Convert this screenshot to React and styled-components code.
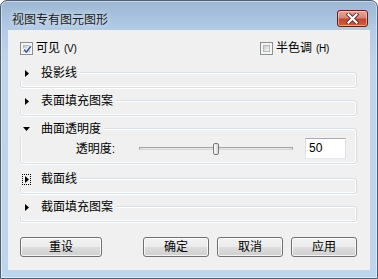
import React from "react";
import styled, { createGlobalStyle } from "styled-components";

const Global = createGlobalStyle`
  html, body { margin: 0; padding: 0; background: #ffffff; }
  body { font-family: "Liberation Sans", "Noto Sans CJK SC", sans-serif; }
  * { box-sizing: border-box; }
`;

const FONT = `"Liberation Sans", "Noto Sans CJK SC", sans-serif`;

const Window = styled.div`
  width: 378px;
  height: 279px;
  border: 1px solid #4e5f72;
  border-radius: 7px 7px 0 0;
  background: linear-gradient(to bottom, #9bb6d4 0px, #b3cbe5 28px, #bcd4ec 60px, #bdd5ed 100%);
  box-shadow: inset 0 0 0 1px rgba(255, 255, 255, 0.45);
  display: flex;
  flex-direction: column;
  padding: 0 7px 8px 7px;
  font-family: ${FONT};
`;

const TitleBar = styled.div`
  height: 29px;
  display: flex;
  align-items: flex-start;
  justify-content: space-between;
  padding: 0 2px 0 4px;
`;

const Title = styled.div`
  margin-top: 11px;
  font-size: 12px;
  line-height: 16px;
  color: #1b1b1b;
  text-shadow: 0 0 6px rgba(255, 255, 255, 0.9);
`;

const CloseButton = styled.div`
  margin-top: 9px;
  width: 31px;
  height: 17px;
  border: 1px solid #5e2118;
  border-radius: 3px;
  background: linear-gradient(to bottom, #e7a597 0%, #d98575 45%, #c2432f 55%, #d0603f 100%);
  box-shadow: inset 0 0 0 1px rgba(255, 220, 210, 0.55);
  display: flex;
  align-items: center;
  justify-content: center;
`;

const Client = styled.div`
  flex: 1;
  background: #f0f0f0;
  display: flex;
  flex-direction: column;
  font-size: 12px;
  color: #000;
`;

const CheckRow = styled.div`
  display: grid;
  grid-template-columns: 240px auto;
  padding: 12px 0 0 12px;
  height: 25px;
`;

const CheckItem = styled.div`
  display: flex;
  align-items: center;
  height: 13px;
  gap: 3px;
  line-height: 13px;
`;

const Box = styled.span`
  width: 13px;
  height: 13px;
  border: 1px solid #8e8f8f;
  background: #f4f4f4;
  padding: 2px;
  display: inline-flex;
  position: relative;
`;

const BoxInner = styled.span`
  flex: 1;
  background: linear-gradient(135deg, #c5c9ce 0%, #e4e6e8 60%, #f6f6f6 100%);
  border: 1px solid #b4b8bd;
`;

const CheckSvg = styled.svg`
  position: absolute;
  left: 1px;
  top: 1px;
`;

const Accel = styled.span`
  font-size: 10px;
  margin-left: 4px;
  letter-spacing: -0.3px;
`;

const Sections = styled.div`
  margin-top: 17px;
  padding: 0 13px 0 12px;
  display: flex;
  flex-direction: column;
`;

const Section = styled.div`
  height: ${(p) => (p.$open ? 50 : 28)}px;
`;

const Frame = styled.div`
  position: relative;
  height: ${(p) => (p.$open ? 36 : 16)}px;
  border: 1px solid #d5dfe5;
  border-radius: 3px;
  box-shadow: inset 0 0 0 1px #ffffff, 0 1px 0 #ffffff;
`;

const Header = styled.div`
  position: absolute;
  top: -8px;
  left: -4px;
  height: 16px;
  display: flex;
  align-items: center;
  padding: 0 3px 0 5px;
  background: #f0f0f0;
`;

const ArrowBox = styled.span`
  width: 9px;
  height: 11px;
  display: flex;
  align-items: center;
  justify-content: center;
  outline: ${(p) => (p.$focus ? "1px dotted #000" : "none")};
  outline-offset: -1px;
  margin-right: 10px;
`;

const HeaderText = styled.span`
  font-size: 12px;
  line-height: 16px;
`;

const Content = styled.div`
  display: flex;
  align-items: center;
  padding: 9px 0 0 54px;
`;

const Label = styled.span`
  width: 40px;
  text-align: right;
  line-height: 16px;
`;

const Slider = styled.div`
  position: relative;
  width: 154px;
  height: 12px;
  margin-left: 24px;
  display: flex;
  align-items: center;
`;

const Track = styled.div`
  width: 100%;
  height: 3px;
  border: 1px solid #a3a3a3;
  border-bottom-color: #d6d6d6;
  background: #e7eaea;
`;

const Thumb = styled.div`
  position: absolute;
  top: 0;
  width: 6px;
  height: 12px;
  border: 1px solid #7a7a7a;
  border-radius: 2px;
  background: linear-gradient(to right, #fbfbfb, #d8d8d8);
`;

const ValueBox = styled.div`
  margin-left: 12px;
  width: 41px;
  height: 21px;
  background: #fff;
  border: 1px solid #abadb3;
  border-left-color: #dbdfe6;
  border-right-color: #dbdfe6;
  border-bottom-color: #e3e9ef;
  padding: 0 3px;
  font-size: 12px;
  line-height: 19px;
`;

const ButtonRow = styled.div`
  margin-top: 3px;
  display: flex;
  padding: 0 13px 0 12px;
`;

const Group = styled.div`
  margin-left: auto;
  display: flex;
  gap: 8px;
`;

const Button = styled.div`
  width: ${(p) => p.$w}px;
  height: 20px;
  border: 1px solid #707070;
  border-radius: 3px;
  background: linear-gradient(to bottom, #f2f2f2 0%, #ebebeb 50%, #dddddd 51%, #cfcfcf 100%);
  box-shadow: inset 0 0 0 1px rgba(255, 255, 255, 0.75);
  display: flex;
  align-items: center;
  justify-content: center;
  font-size: 12px;
  line-height: 16px;
`;

function Check({ checked }) {
  return (
    <Box>
      <BoxInner />
      {checked && (
        <CheckSvg width="11" height="11" viewBox="0 0 11 11">
          <path d="M2.2 5.6 L4.3 8.2 L8.8 2.2" fill="none" stroke="#fff" strokeWidth="2.8" strokeLinecap="round" strokeLinejoin="round" />
          <path d="M2.2 5.6 L4.3 8.2 L8.8 2.2" fill="none" stroke="#3c57a0" strokeWidth="1.6" strokeLinejoin="round" />
        </CheckSvg>
      )}
    </Box>
  );
}

function Arrow({ open }) {
  return open ? (
    <svg width="7" height="4" viewBox="0 0 7 4">
      <path d="M0 0 H7 L3.5 4 Z" fill="#000" />
    </svg>
  ) : (
    <svg width="4" height="7" viewBox="0 0 4 7">
      <path d="M0 0 V7 L4 3.5 Z" fill="#000" />
    </svg>
  );
}

const sections = [
  { title: "投影线" },
  { title: "表面填充图案" },
  { title: "曲面透明度", open: true },
  { title: "截面线", focus: true },
  { title: "截面填充图案" },
];

export default function App() {
  const value = 50;
  return (
    <>
      <Global />
      <Window>
        <TitleBar>
          <Title>视图专有图元图形</Title>
          <CloseButton>
            <svg width="13" height="11" viewBox="0 0 13 11">
              <path d="M2.5 1.5 L10.5 9.5 M10.5 1.5 L2.5 9.5" stroke="#5a2a22" strokeWidth="4" strokeLinecap="square" />
              <path d="M2.5 1.5 L10.5 9.5 M10.5 1.5 L2.5 9.5" stroke="#ffffff" strokeWidth="2.2" strokeLinecap="square" />
            </svg>
          </CloseButton>
        </TitleBar>
        <Client>
          <CheckRow>
            <CheckItem>
              <Check checked />
              <span>
                可见<Accel>(V)</Accel>
              </span>
            </CheckItem>
            <CheckItem>
              <Check />
              <span>
                半色调<Accel>(H)</Accel>
              </span>
            </CheckItem>
          </CheckRow>
          <Sections>
            {sections.map((s) => (
              <Section key={s.title} $open={s.open}>
                <Frame $open={s.open}>
                  <Header>
                    <ArrowBox $focus={s.focus}>
                      <Arrow open={s.open} />
                    </ArrowBox>
                    <HeaderText>{s.title}</HeaderText>
                  </Header>
                  {s.open && (
                    <Content>
                      <Label>透明度:</Label>
                      <Slider>
                        <Track />
                        <Thumb style={{ left: `${(value / 100) * 148}px` }} />
                      </Slider>
                      <ValueBox>{value}</ValueBox>
                    </Content>
                  )}
                </Frame>
              </Section>
            ))}
          </Sections>
          <ButtonRow>
            <Button $w={82}>重设</Button>
            <Group>
              <Button $w={66}>确定</Button>
              <Button $w={66}>取消</Button>
              <Button $w={66}>应用</Button>
            </Group>
          </ButtonRow>
        </Client>
      </Window>
    </>
  );
}
